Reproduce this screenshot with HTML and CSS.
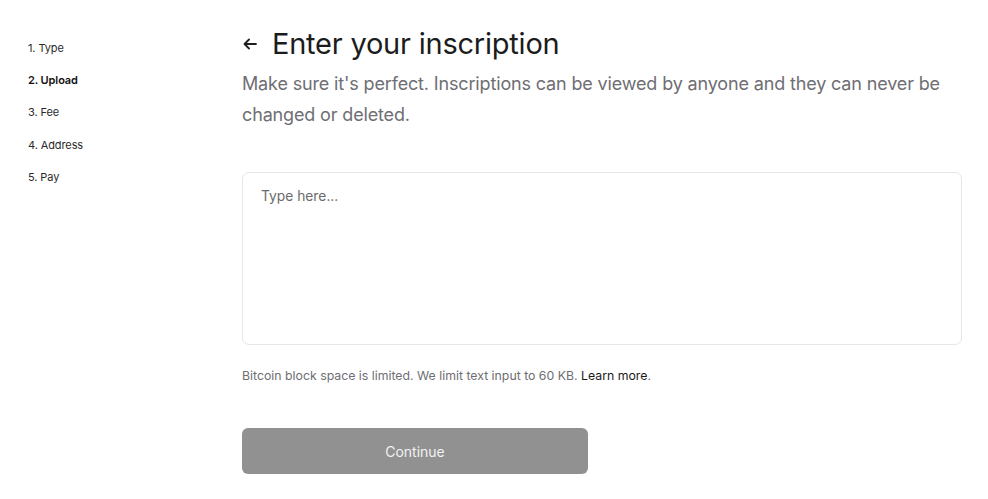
FILE: index.html
```html
<!DOCTYPE html>
<html>
<head>
<meta charset="utf-8">
<link rel="stylesheet" href="styles.css">
</head>
<body>
<div class="page">
  <nav class="steps">
    <div class="step">1. Type</div>
    <div class="step active">2. Upload</div>
    <div class="step">3. Fee</div>
    <div class="step">4. Address</div>
    <div class="step">5. Pay</div>
  </nav>
  <main class="main">
    <div class="title-row">
      <svg class="back" width="14" height="12" viewBox="0 0 14 12" fill="none" stroke="#1f1f1f" stroke-width="1.8" stroke-linecap="round" stroke-linejoin="round"><path d="M13 6H1.5M6 1.5L1.5 6L6 10.5"/></svg>
      <h1 class="title">Enter your inscription</h1>
    </div>
    <p class="subtitle">Make sure it's perfect. Inscriptions can be viewed by anyone and they can never be changed or deleted.</p>
    <textarea class="input" placeholder="Type here..."></textarea>
    <p class="hint">Bitcoin block space is limited. We limit text input to 60 KB. <a class="link">Learn more</a>.</p>
    <button class="continue">Continue</button>
  </main>
</div>
</body>
</html>
```
FILE: styles.css
```css
* { box-sizing: border-box; }
html, body { margin: 0; padding: 0; background: #fff; }
body { font-family: Inter, "Liberation Sans", sans-serif; color: #1f1f1f; }
.page { display: flex; padding-top: 24px; }
.steps { width: 242px; padding-left: 28px; display: flex; flex-direction: column; }
.step { font-size: 11px; line-height: 16px; height: 32.2px; padding-top: 16px; color: #2a2a2a; letter-spacing: -0.1px; }
.step.active { font-weight: 600; color: #111; }
.main { width: 720px; display: flex; flex-direction: column; }
.title-row { display: flex; align-items: center; gap: 15px; height: 38px; }
.back { margin-left: 1px; margin-top: 1px; }
.title { margin: 0; font-size: 29px; font-weight: 400; letter-spacing: -0.22px; color: #1c1c1c; }
.subtitle { margin: 0; margin-top: 6px; font-size: 18px; line-height: 31px; color: #6e6e73; letter-spacing: -0.15px; }
.input { margin-top: 42px; width: 720px; height: 173px; border: 1px solid #e6e6e6; border-radius: 7px; padding: 15px 18px; font-family: inherit; font-size: 13.8px; resize: none; outline: none; }
.input::placeholder { color: #6b6b6b; }
.hint { margin: 0; margin-top: 22px; font-size: 12.3px; line-height: 18px; color: #6e6e73; }
.link { color: #1a1a1a; text-decoration: none; }
.continue { margin-top: 43px; width: 346px; height: 46px; border: none; border-radius: 6px; background: #919191; color: #f2f2f2; font-family: inherit; font-size: 14px; padding-bottom: 1px; }
```
